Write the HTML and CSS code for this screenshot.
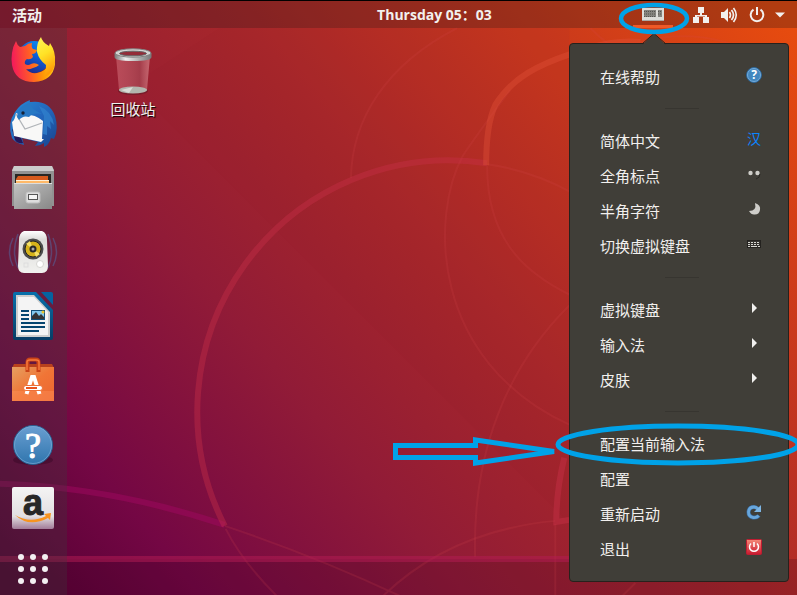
FILE: index.html
```html
<!DOCTYPE html>
<html lang="zh-CN">
<head>
<meta charset="utf-8">
<title>桌面</title>
<link rel="stylesheet" href="styles.css">
</head>
<body>
<svg class="wallpaper" viewBox="0 0 797 595" preserveAspectRatio="xMidYMid slice" aria-hidden="true">
  <defs>
    <linearGradient id="wall" gradientUnits="userSpaceOnUse" x1="50" y1="620" x2="780" y2="0">
      <stop offset="0" stop-color="#560034"/><stop offset=".14" stop-color="#740744"/><stop offset=".21" stop-color="#7e0e40"/><stop offset=".35" stop-color="#911b37"/><stop offset=".43" stop-color="#9a2031"/><stop offset=".56" stop-color="#a8272a"/><stop offset=".74" stop-color="#c3351f"/><stop offset="1" stop-color="#e84c0e"/>
    </linearGradient>
  </defs>
  <rect width="797" height="595" fill="url(#wall)"/>
  <path d="M132 85L569 522V28H220z" fill="#902030" opacity=".07"/>
  <path d="M0 558H797V595H0z" fill="#300020" opacity=".2"/>
  <g fill="none" stroke="#d84a50" stroke-opacity=".17" stroke-width="2">
    <path d="M351 178C352 120 385 65 457 28"/>
    <path d="M487 166C487 235 520 270 569 294M487 164Q530 170 569 191"/>
    <path d="M510 90Q480 130 463 155C430 215 430 360 569 424"/>
    <path d="M475 556C472 450 508 365 569 305"/>
    <path d="M225 525Q315 555 400 595M226 528Q242 560 277 595M383 595Q450 530 555 520M555 523V595M635 582L622 595"/>
    <path d="M640 42Q720 20 797 80M590 28Q620 60 700 90"/>
  </g>
  <g fill="none" stroke-width="6">
    <path d="M0 483Q110 486 225 524" stroke="#a00860" stroke-opacity=".5"/>
    <path d="M225 525A251 251 0 0 1 487 163" stroke="#c83048" stroke-opacity=".4"/>
    <path d="M486 165C486 142 488 120 495 105C512 77 540 64 570 54C600 43 620 40 640 42" stroke="#e05038" stroke-opacity=".4"/>
    <path d="M564 457Q556 490 556 521L569 519" stroke="#c83048" stroke-opacity=".45"/>
    <path d="M0 558H569" stroke="#b41c54" stroke-opacity=".5"/>
  </g>
</svg>

<header class="topbar">
  <button class="activities">活动</button>
  <button class="clock">Thursday 05：03</button>
  <div class="tray">
    <button class="tray-keyboard" aria-label="输入法">
      <svg width="22" height="13" viewBox="0 0 22 13"><path d="M0 0h22v13H0z" fill="#dcdcd8"/><path d="M0 12h22v1H0z" fill="#aaa9a4"/><path d="M2 2h12v7H2zM16 2h4v7h-4z" fill="#85847f"/><path d="M2 3.500h12M2 6h12M2 8.500h12M16 3.500h4M16 6h4" stroke="#55544f" stroke-dasharray="1 1"/></svg>
    </button>
    <button aria-label="网络">
      <svg width="16" height="16" viewBox="0 0 16 16"><path d="M5 0h6v6H9v2h5v2h2v6h-6v-6h2V9.500H4V10h2v6H0v-6h2V8h5V6H5z" fill="#f2f0ee"/></svg>
    </button>
    <button aria-label="音量">
      <svg width="16" height="16" viewBox="0 0 16 16" fill="none" stroke="#f2f0ee"><path d="M0 5h3l4-4v14l-4-4H0z" fill="#f2f0ee" stroke="none"/><path d="M8.500 5q2 3 0 6" stroke-width="1.600"/><path d="M10.500 3q4 5 0 10" stroke-width="1.700"/><path d="M12.500 1q5.500 7 0 14" stroke-width="1.600"/></svg>
    </button>
    <button class="tray-power" aria-label="系统">
      <svg width="16" height="16" viewBox="0 0 16 16" fill="none" stroke="#f2f0ee" stroke-width="2"><path d="M4.500 2.700a6.300 6.300 0 1 0 7 0M8 0v8"/></svg>
      <svg width="10" height="6" viewBox="0 0 10 6"><path d="M0 .5h10L5 5.500z" fill="#f2f0ee"/></svg>
    </button>
  </div>
</header>

<main class="desktop">
  <nav class="dock" aria-label="收藏夹">
    <button aria-label="Firefox">
      <svg viewBox="0 0 48 48"><defs><linearGradient id="fx" x1="0" y1=".5" x2="1" y2=".4"><stop offset="0" stop-color="#f4185c"/><stop offset=".4" stop-color="#ff5a28"/><stop offset=".7" stop-color="#ff9a05"/><stop offset="1" stop-color="#ffd21c"/></linearGradient><linearGradient id="fy" x1="0" y1="0" x2=".3" y2="1"><stop offset="0" stop-color="#fff45a"/><stop offset=".5" stop-color="#ffe226"/><stop offset="1" stop-color="#ff9c08"/></linearGradient><linearGradient id="fb" x1="1" y1="0" x2=".5" y2="1"><stop offset="0" stop-color="#0a9bf5"/><stop offset=".5" stop-color="#0c62dd"/><stop offset="1" stop-color="#1b2f93"/></linearGradient></defs><circle cx="25" cy="21" r="16" fill="url(#fb)"/><path d="M3 17Q4 10 7 5q1 4 4 6l5-1q3-3 7-3-1 4 1 6l4 1q-1 4-5 4l1 3q-2 3-6 2-3 2-2 5 3 2 6 0 4-2 8 1-2 2-6 3-4 2-7 1 4 5 11 4 9-2 12-9Q45 18 37 8q9 8 9 20-2 17-21 18Q6 46 3 29q-1-6 0-12z" fill="url(#fx)"/><path d="M32 1q1 5 8 9l1-3q6 9 5 19-1 11-10 15 1-7 1-12-7-5-9-13-1-8 4-15z" fill="url(#fy)"/></svg>
    </button>
    <button aria-label="Thunderbird">
      <svg viewBox="0 0 48 48"><defs><linearGradient id="tb" x1="0" y1="0" x2="1" y2="1"><stop offset="0" stop-color="#268bd6"/><stop offset=".5" stop-color="#2367bd"/><stop offset="1" stop-color="#18438d"/></linearGradient></defs><path d="M3 38Q-2 23 6 12 12 3 21 0q-1 2 1 2 18-2 24 14 4 13-1 23l-3-1q-2 7-7 9v-4q-4 3-9 3l3-4-16-4 2 7q-9-2-12-7z" fill="url(#tb)"/><path d="M3 29l3 11q3 4 8 3l-2-5" fill="#241759"/><path d="M30 6q13 5 15 19l-4-4 1 8-4-3v9l-4-1 1-18z" fill="#2f80cc" opacity=".8"/><path d="M3 22q3-2 4-9l5 2q12-2 22 6l-1 18 2 0-3 3L5 36z" fill="#f8f8f7"/><path d="M7 14l9 15 17-6" fill="none" stroke="#b0b4b8" stroke-width="1.300"/><path d="M8 17Q9 5 22 3q-1 6 11 11-9-2-13 3-6-2-10 3z" fill="#2678c4"/><circle cx="14" cy="13" r="1.700" fill="#152238"/></svg>
    </button>
    <button aria-label="文件">
      <svg viewBox="0 0 48 48"><defs><linearGradient id="fl" x1="0" y1="0" x2="1" y2="1"><stop offset="0" stop-color="#c2c2c1"/><stop offset="1" stop-color="#888"/></linearGradient></defs><path d="M5 2h38l2 4v36H3V6z" fill="#929292"/><path d="M5 2h38l2 5H3z" fill="#ccc"/><path d="M6 10h36v10H6z" fill="#292723"/><path d="M9 12h30v8H7v-5z" fill="#d65a1c"/><path d="M7 16h33v4H7z" fill="#ffb968"/><path d="M7 16.500h33" stroke="#fff0d8"/><path d="M5 19h38v26H5z" fill="url(#fl)"/><path d="M5 19.500h38" stroke="#dedede"/><rect x="17" y="28" width="14" height="11" rx="2" fill="#ddd" stroke="#bdbdbd"/><rect x="19.500" y="30.500" width="9" height="5" fill="#f5f5f5" stroke="#555"/></svg>
    </button>
    <button aria-label="Rhythmbox">
      <svg viewBox="0 0 48 48"><g fill="none" stroke="#5269a4" stroke-width="1.500" opacity=".5"><path d="M4 10q-7 14 0 28M9 6q-7 18 0 34M44 10q7 14 0 28M39 6q7 18 0 34"/></g><defs><linearGradient id="sp" x1="0" y1="0" x2="0" y2="1"><stop offset="0" stop-color="#fff"/><stop offset=".2" stop-color="#ddddda"/><stop offset="1" stop-color="#f1f1ef"/></linearGradient></defs><path d="M15 3h18q5 2 5 9l1 26q0 7-6 7H15q-6 0-6-7l1-26q0-7 5-9z" fill="url(#sp)"/><circle cx="24" cy="21" r="10.500" fill="#4d4d4d"/><circle cx="24" cy="21" r="8" fill="#d6b31b" stroke="#222"/><path d="M24 21l-7-5 4-3zM24 21l7 5-4 3z" fill="#f5e169"/><circle cx="24" cy="21" r="3.500" fill="#292929"/><circle cx="24" cy="21" r="1.500" fill="#aaa"/><circle cx="31" cy="36" r="3.500" fill="#fff" stroke="#d5d5d2"/><rect x="15" y="35" width="4" height="4" fill="none" stroke="#ddd"/></svg>
    </button>
    <button aria-label="LibreOffice Writer">
      <svg viewBox="0 0 48 48"><defs><linearGradient id="lo" x1="0" y1="0" x2="0" y2="1"><stop offset="0" stop-color="#0870ab"/><stop offset="1" stop-color="#083d65"/></linearGradient></defs><path d="M6 0h21l17 18v28q0 2-2 2H6q-2 0-2-2V2q0-2 2-2z" fill="url(#lo)"/><path d="M32 0h10q2 0 2 2v11z" fill="#0563a0"/><path d="M7 3h18l16 17v25H7z" fill="#cecece"/><path d="M9 5h16l14 15v23H9z" fill="#f4f4f4"/><path d="M12 19h8M12 23h8M12 27h8M12 31h24M12 35h24M12 39h18" stroke="#06466f" stroke-width="2"/><rect x="22.500" y="18.500" width="13" height="9" fill="#82c8ed" stroke="#135078"/><path d="M23 27v-3l4-4 3 4 2-2 3 3v2z" fill="#343434"/><circle cx="34" cy="20" r="1.500" fill="#e9c62a"/></svg>
    </button>
    <button aria-label="Ubuntu 软件">
      <svg viewBox="0 0 48 48"><defs><linearGradient id="us" x1="0" y1="0" x2="1" y2="1"><stop offset="0" stop-color="#e5a061"/><stop offset=".5" stop-color="#f07536"/><stop offset="1" stop-color="#ec6631"/></linearGradient></defs><path d="M5 8h38l2 4v5H3v-5z" fill="#b8411d"/><path d="M3 11h42v34H3z" fill="url(#us)"/><path d="M3 35h42v10H3z" fill="#ff945d" opacity=".4"/><path d="M18.500 16V6.500q0-3 3-3h5q3 0 3 3V16" fill="none" stroke="#ca4317" stroke-width="4"/><path d="M18 14V6q0-2 3-2h6q3 0 3 2v8" fill="none" stroke="#f77a3c" stroke-width="1.500"/><path d="M17.500 38L23 21h2l5.500 17" fill="none" stroke="#fff" stroke-width="4"/><rect x="14.500" y="29.500" width="19" height="5" rx="2.500" fill="#fff" stroke="#ec7038"/><path d="M17 32h11" stroke="#e9541e" stroke-width="2"/></svg>
    </button>
    <button aria-label="帮助">
      <svg viewBox="0 0 48 48"><defs><linearGradient id="hp" x1="0" y1="0" x2="0" y2="1"><stop offset="0" stop-color="#6a9fd2"/><stop offset="1" stop-color="#2f75ad"/></linearGradient></defs><ellipse cx="24" cy="40" rx="20" ry="5" fill="#200018" opacity=".3"/><circle cx="24" cy="25" r="19.500" fill="url(#hp)" stroke="#285e90"/><circle cx="24" cy="25" r="18.500" fill="none" stroke="#79aad5" opacity=".7"/><text class="help-mark" x="24" y="38">?</text></svg>
    </button>
    <button aria-label="Amazon">
      <svg viewBox="0 0 48 48"><defs><linearGradient id="am" x1="0" y1="0" x2="0" y2="1"><stop offset="0" stop-color="#f4f4f4"/><stop offset=".7" stop-color="#e2dfe1"/><stop offset="1" stop-color="#a27b98"/></linearGradient></defs><rect x="3" y="3" width="42" height="42" rx="2" fill="url(#am)"/><text class="shop-mark" x="24" y="31">a</text><path d="M6 31q15 9 31 1l-2-2 7-1-1 7-2-2Q20 44 6 31z" fill="#f79420"/></svg>
    </button>
    <button aria-label="显示应用程序">
      <svg viewBox="0 0 48 48" fill="#f3f0f2"><circle cx="12" cy="9" r="3"/><circle cx="24" cy="9" r="3"/><circle cx="36" cy="9" r="3"/><circle cx="12" cy="21" r="3"/><circle cx="24" cy="21" r="3"/><circle cx="36" cy="21" r="3"/><circle cx="12" cy="33" r="3"/><circle cx="24" cy="33" r="3"/><circle cx="36" cy="33" r="3"/></svg>
    </button>
  </nav>

  <button class="desktop-icon">
    <svg width="48" height="48" viewBox="0 0 48 48"><defs><linearGradient id="rim"><stop offset="0" stop-color="#777"/><stop offset=".3" stop-color="#eee"/><stop offset=".6" stop-color="#bbb"/><stop offset="1" stop-color="#777"/></linearGradient><linearGradient id="bin"><stop offset="0" stop-color="#d97781" stop-opacity=".5"/><stop offset=".7" stop-color="#a84855" stop-opacity=".7"/><stop offset="1" stop-color="#e19499" stop-opacity=".6"/></linearGradient></defs><ellipse cx="24" cy="43" rx="15" ry="4" fill="#641b26" opacity=".6"/><path d="M7 8h34l-3 34q-14 6-28 0z" fill="url(#bin)"/><ellipse cx="24" cy="42" rx="14" ry="3.500" fill="#b2b6ae"/><path d="M12 42l12-3-4 6z" fill="#d9dcd6"/><path d="M5.500 5v4q0 4 18.500 4t18.500-4V5z" fill="url(#rim)"/><ellipse cx="24" cy="5" rx="18" ry="4.200" fill="#d4d4d2" stroke="#818181"/><ellipse cx="24" cy="5.500" rx="13.500" ry="2.300" fill="#942c38" stroke="#666"/></svg>
    <span>回收站</span>
  </button>
</main>

<section class="menu" aria-label="输入法菜单">
  <svg class="menu-tip" width="24" height="12" viewBox="0 0 24 12"><path d="M0 12L12 0.500L24 12z" fill="#403e38"/><path d="M0 11L12 .5L24 11" fill="none" stroke="#27211c"/></svg>
  <button>在线帮助
    <svg width="16" height="16" viewBox="0 0 16 16"><circle cx="8" cy="8" r="7.400" fill="#4387bf" stroke="#2c69a0"/><circle cx="8" cy="8" r="6.500" fill="none" stroke="#75a9d6"/><text class="help-mark-small" x="8" y="12">?</text></svg>
  </button>
  <hr>
  <button>简体中文 <span class="han">汉</span></button>
  <button>全角标点
    <svg width="16" height="16" viewBox="0 0 16 16"><circle cx="4.500" cy="7" r="2.200" fill="#cecdc9"/><circle cx="11.500" cy="7" r="2.200" fill="#cecdc9"/><path d="M14 8q0 4-4 5" fill="none" stroke="#292824"/></svg>
  </button>
  <button>半角字符
    <svg width="16" height="16" viewBox="0 0 16 16"><path d="M9 2q6 2 5 7-1 5-6 4.500-3 0-5-3.500 8 0 6-8z" fill="#cecdc9"/></svg>
  </button>
  <button>切换虚拟键盘
    <svg width="16" height="16" viewBox="0 0 16 16"><rect x="1.500" y="4.500" width="13" height="7" fill="#35332f" stroke="#24221f"/><g stroke="#d8d7d2"><path d="M2 6.500h12M2 8.500h12" stroke-dasharray="2 1"/><path d="M2 10.500h2M5 10.500h6M12 10.500h2"/></g></svg>
  </button>
  <hr>
  <button>虚拟键盘 <svg width="16" height="16" viewBox="0 0 16 16"><path d="M6 3l5 5-5 5z" fill="#f1f0ee"/></svg></button>
  <button>输入法 <svg width="16" height="16" viewBox="0 0 16 16"><path d="M6 3l5 5-5 5z" fill="#f1f0ee"/></svg></button>
  <button>皮肤 <svg width="16" height="16" viewBox="0 0 16 16"><path d="M6 3l5 5-5 5z" fill="#f1f0ee"/></svg></button>
  <hr>
  <button>配置当前输入法</button>
  <button>配置</button>
  <button>重新启动
    <svg width="16" height="16" viewBox="0 0 16 16"><path d="M13 11.500Q11 14 7 13.500 2.500 12.500 2.500 8 3 3 8 3q2 0 4 2" fill="none" stroke="#386b9f" stroke-width="4"/><path d="M12.500 11.500Q11 14 7 13.500 2.500 12.500 2.500 8 3 3 8 3q2 0 4 2" fill="none" stroke="#68a6dc" stroke-width="2.800"/><path d="M15 1v7H8z" fill="#7db5e4"/></svg>
  </button>
  <button>退出
    <svg width="16" height="16" viewBox="0 0 16 16"><defs><linearGradient id="quit" x1="0" y1="0" x2="0" y2="1"><stop offset="0" stop-color="#f58a78"/><stop offset="1" stop-color="#c8182e"/></linearGradient></defs><rect x=".5" y=".5" width="15" height="15" rx="1" fill="url(#quit)" stroke="#bf1c31"/><path d="M5 4.500a4.500 4.500 0 1 0 6 0M8 3v5" fill="none" stroke="#fff" stroke-width="1.500"/></svg>
  </button>
</section>

<svg class="marks" width="797" height="595" viewBox="0 0 797 595" fill="none" stroke="#00a2e8" aria-hidden="true">
  <ellipse cx="654" cy="18.500" rx="33" ry="13.500" stroke-width="4.500"/>
  <ellipse cx="678" cy="444.500" rx="120" ry="18.500" stroke-width="5"/>
  <path d="M395.500 445.500H475.500V440L554 451.500L475.500 463V457.500H395.500z" stroke-width="5"/>
</svg>
</body>
</html>
```
FILE: styles.css
```css
* { box-sizing: border-box; }

body {
  position: relative;
  display: flex;
  flex-direction: column;
  min-height: 100vh;
  margin: 0;
  overflow: hidden;
  color: #f2f0ee;
  font: 15px/20px "Noto Sans", "Noto Sans CJK SC", sans-serif;
}

button {
  margin: 0;
  padding: 0;
  border: 0;
  background: none;
  color: inherit;
  font: inherit;
}

svg { display: block; flex: none; overflow: visible; }

.wallpaper {
  position: absolute;
  inset: 0;
  z-index: -1;
  width: 100%;
  height: 100%;
  overflow: hidden;
}

.topbar {
  display: grid;
  grid-template-columns: 1fr auto 1fr;
  align-items: center;
  height: 28px;
  padding: 0 12px;
  border-top: 1px solid #000;
  background: rgba(40, 20, 20, 0.28);
  font-weight: 700;
}

.activities { justify-self: start; }

.clock {
  font-family: "Open Sans", "Noto Sans CJK SC", sans-serif;
  font-size: 14px;
  margin-left: 72px;
}

.tray {
  display: flex;
  align-items: center;
  justify-self: end;
  gap: 12px;
  height: 27px;
}

.tray-keyboard {
  display: flex;
  justify-content: center;
  width: 40px;
  height: 27px;
  margin-right: 8px;
  padding-top: 7px;
  border-bottom: 3px solid #ef5926;
}

.tray-power { display: flex; align-items: center; gap: 10px; }

.desktop { display: flex; flex: 1; align-items: flex-start; }

.dock {
  display: flex;
  flex-direction: column;
  align-items: center;
  align-self: stretch;
  gap: 16px;
  width: 67px;
  padding: 8px 1px 0 0;
  background: rgba(60, 60, 60, 0.3);
}

.dock button, .dock svg { width: 48px; height: 48px; }

.desktop-icon {
  display: flex;
  flex-direction: column;
  align-items: center;
  gap: 3px;
  margin: 20px 0 0 42px;
  text-shadow: 1px 1px 1px #000;
}

.menu {
  position: absolute;
  top: 43px;
  right: 8px;
  display: flex;
  flex-direction: column;
  width: 220px;
  padding: 15px 26px 15px 30px;
  border: 1px solid #27211c;
  border-radius: 4px;
  background: #403e38;
}

.menu button {
  display: flex;
  align-items: center;
  justify-content: space-between;
  height: 35px;
  text-align: left;
}

.menu button > svg, .han { margin-bottom: 3px; }

.menu hr {
  width: 34px;
  height: 1px;
  margin: 14px 65px;
  border: 0;
  background: #373530;
}

.menu-tip { position: absolute; top: -11px; left: 72px; }

.han {
  width: 16px;
  color: #0a84ff;
  font-size: 14px;
  text-align: center;
}

.help-mark, .help-mark-small, .shop-mark { fill: #fff; text-anchor: middle; }
.help-mark { font: 36px "Liberation Serif", serif; stroke: #fff; }
.help-mark-small { font: 700 12px "Noto Sans", sans-serif; }
.shop-mark { fill: #272727; stroke: #272727; font: 700 36px "Liberation Sans", sans-serif; }

.marks { position: absolute; top: 0; right: 0; overflow: hidden; pointer-events: none; }
```
